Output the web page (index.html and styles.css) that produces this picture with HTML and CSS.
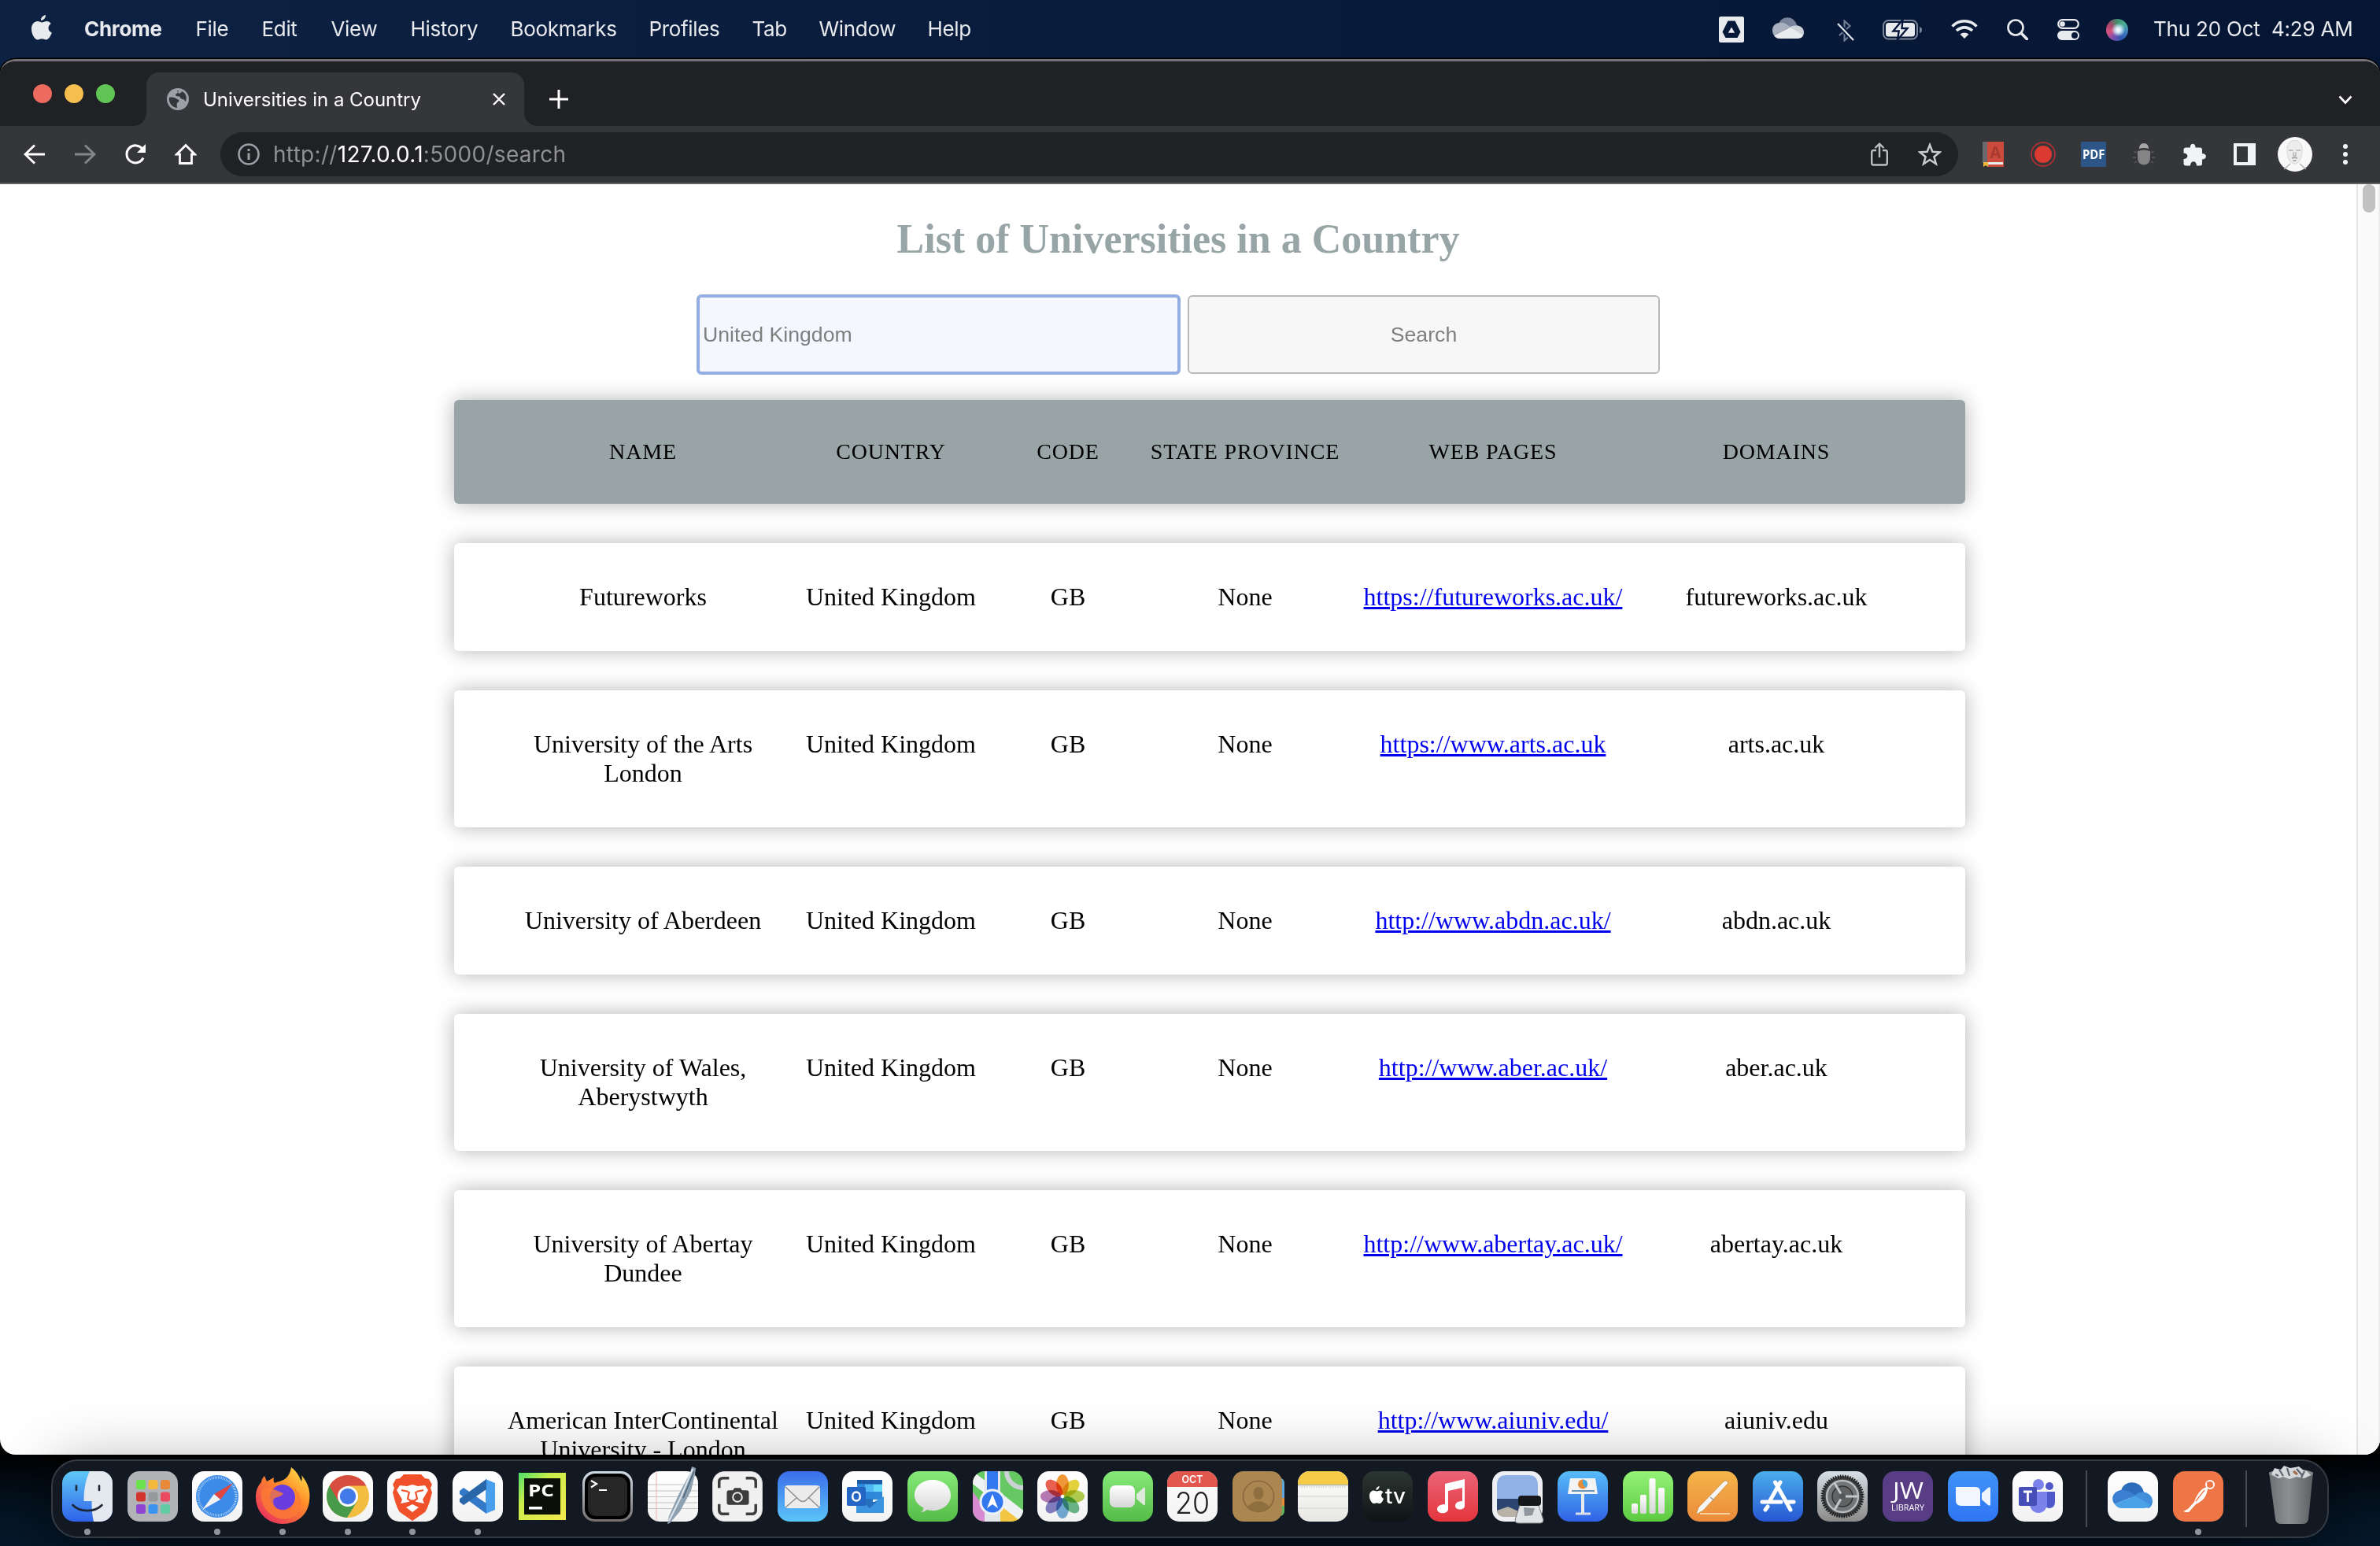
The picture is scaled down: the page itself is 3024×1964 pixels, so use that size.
FILE: index.html
```html
<!DOCTYPE html>
<html lang="en">
<head>
<meta charset="utf-8">
<title>Universities in a Country</title>
<link rel="stylesheet" href="styles.css">
</head>
<body>
<header class="menubar">
  <svg class="apple" viewBox="0 0 26 32"><path d="M18 0c.3 3-2.400 7-6 7C11.600 4 14.500.600 18 0zM24.800 11c-5 3.200-3.800 9.700 1 11.500C24.300 27 21.500 31.500 18.500 31.500c-2 0-2.800-1.200-5.200-1.200s-3.300 1.200-5.200 1.200C4 31.500 0 24.500 0 17.800 0 11.500 3.800 8 7.800 8c2.200 0 4 1.400 5.500 1.400 1.400 0 3.500-1.500 6.200-1.500 1.800 0 3.900 1 5.300 3.100z"/></svg>
  <nav class="menus">
    <b>Chrome</b><span>File</span><span>Edit</span><span>View</span><span>History</span><span>Bookmarks</span><span>Profiles</span><span>Tab</span><span>Window</span><span>Help</span>
  </nav>
  <div class="tray">
    <svg class="t-drive" viewBox="0 0 32 33"><rect width="32" height="33" rx="2.500" fill="#e8eaee"/><path fill="#06183a" fill-rule="evenodd" d="M11.500 5.500h9L27.500 19.500 23.500 27H8.500L4.500 19.500zM16 13.500l-4.200 7.300h8.400z"/></svg>
    <svg class="t-cloud" viewBox="0 0 40 27"><path fill="#79839a" d="M8 8C12-2 27-3 31 10L22 14z"/><path fill="#a9b0be" d="M9 7c6-1 9 2 14 5.500L2 23C-3 15 2 7 9 7z"/><path fill="#cdd1d8" d="M22 13c6-5 18-3 18 6 0 2-.500 3-1 4z"/><path fill="#e8eaee" d="M2 23 22.500 12.800 39.300 22.500C38 26 35 27 32 27H9c-3 0-5.500-1.500-7-4z"/></svg>
    <svg class="t-bt" viewBox="0 0 22 28"><path d="M3 20 16.500 8 9.500 1.500v25l7-6.500L13 16.500" fill="none" stroke="#707b91" stroke-width="2.200"/><path d="M1 5 21 26" stroke="#06183a" stroke-width="6"/><path d="M1 5 21 26" stroke="#dfe3ea" stroke-width="2.200"/></svg>
    <svg class="t-bat" viewBox="0 0 50 26"><rect x="1" y="1" width="43" height="23.500" rx="6.500" fill="none" stroke="#7c8598" stroke-width="2"/><path d="M47 9v8q3-1 3-4t-3-4z" fill="#7c8598"/><rect x="4" y="4" width="37" height="17.500" rx="3.500" fill="#e8eaee"/><path d="M25.500 0 13.500 14.500h7.200L19 25.500 31.500 11h-7z" fill="#e8eaee" stroke="#06183a" stroke-width="2.400"/></svg>
    <svg class="t-wifi" viewBox="0 0 34 25"><path d="M1.500 9.500C10 .500 24 .500 32.500 9.500M7 15c6-5.500 14-5.500 20 0" fill="none" stroke="#e8eaee" stroke-width="3.600"/><path d="M17 25l-5.500-5.500q5.500-4 11 0z" fill="#e8eaee"/></svg>
    <svg class="t-search" viewBox="0 0 27 27"><circle cx="11" cy="11" r="9.500" fill="none" stroke="#e8eaee" stroke-width="2.600"/><path d="M18 18l7.300 7.500" stroke="#e8eaee" stroke-width="3.600" stroke-linecap="round"/></svg>
    <svg class="t-cc" viewBox="0 0 28 27"><rect x="1.200" y="1.200" width="25.600" height="10.600" rx="5.300" fill="none" stroke="#e8eaee" stroke-width="2.200"/><circle cx="6.500" cy="6.500" r="3.300" fill="#e8eaee"/><rect y="15" width="28" height="12" rx="6" fill="#e8eaee"/><circle cx="22" cy="21" r="4" fill="#06183a"/></svg>
    <i class="t-siri"></i>
    <span class="clock">Thu 20 Oct&nbsp; 4:29 AM</span>
  </div>
</header>

<section class="window">
  <div class="tabstrip">
    <div class="lights"><i class="red"></i><i class="yellow"></i><i class="green"></i></div>
    <div class="tab">
      <svg class="favicon" viewBox="0 0 28 28"><circle cx="14" cy="14" r="14" fill="#9aa0a6"/><path fill="#35363a" d="M3 12c4-1 8 0 10 2 3 0 3 3 1 4-2 1-1 4-1 7C6 24 2 18 3 12zM13 3c2 2 0 4-2 5 0 3 4 2 6 3 0 3 2 3 4 3l3 3c2-6 0-11-5-13-1 3-3 2-4 3-1-1-1-3 0-4z"/></svg>
      <span class="tab-title">Universities in a Country</span>
      <svg class="tab-close" viewBox="0 0 16 16"><path d="M1 1l14 14M15 1 1 15" stroke="#fff" stroke-width="2.400"/></svg>
    </div>
    <svg class="newtab" viewBox="0 0 24 24"><path d="M12 0v24M0 12h24" stroke="#fff" stroke-width="3"/></svg>
    <svg class="chevron" viewBox="0 0 18 12"><path d="M1.500 1.500 9 9.500l7.500-8" fill="none" stroke="#fff" stroke-width="2.600"/></svg>
  </div>
  <div class="toolbar">
    <div class="cell back"><svg width="27" height="26" viewBox="0 0 27 26"><path d="M27 13H2M14 1.500 2 13l12 11.500" fill="none" stroke="#fff" stroke-width="2.800"/></svg></div>
    <div class="cell"><svg width="27" height="26" viewBox="0 0 27 26"><path d="M0 13h25M13 1.500 25 13 13 24.500" fill="none" stroke="#85868a" stroke-width="2.800"/></svg></div>
    <div class="cell"><svg width="28" height="28" viewBox="0 0 28 28"><path d="M24 18.500A11 11 0 1 1 23 7.500" fill="none" stroke="#fff" stroke-width="3"/><path d="M27 1v11H16z" fill="#fff"/></svg></div>
    <div class="cell"><svg width="28" height="28" viewBox="0 0 28 28"><path d="M2.500 14 14 2.500 25.500 14H21.500v11.500h-15V14z" fill="none" stroke="#fff" stroke-width="2.800"/></svg></div>
    <div class="omnibox">
      <svg class="info" viewBox="0 0 28 28"><circle cx="14" cy="14" r="12.500" fill="none" stroke="#9aa0a6" stroke-width="2.600"/><path d="M14 12.500V21M14 7v3" stroke="#9aa0a6" stroke-width="3"/></svg>
      <span class="url">http://<em>127.0.0.1</em>:5000/search</span>
      <div class="cell"><svg width="22" height="30" viewBox="0 0 22 30"><path d="M7 10H3.500Q1.200 10 1.200 12.500V26q0 2.500 2.300 2.500h15q2.300 0 2.300-2.500V12.500Q20.800 10 18.500 10H15M11 19V2M5.500 7 11 1.700 16.500 7" fill="none" stroke="#bdbec0" stroke-width="2.400"/></svg></div>
      <div class="cell"><svg width="30" height="30" viewBox="0 0 30 30"><path d="M15 3l3.400 8.800 9.200.500-7.200 5.900 2.500 9L15 22l-7.900 5.200 2.500-9-7.200-5.900 9.200-.500z" fill="none" stroke="#c9cacc" stroke-width="2.500"/></svg></div>
    </div>
    <div class="cell"><svg width="27" height="32" viewBox="0 0 27 32"><path fill="#6a6a6d" d="M0 0h6v27H0z"/><path fill="#cb4b3d" d="M6 0h21v32H6z"/><path fill="#e8eef0" d="M6 26h20v3H6z"/><path fill="#f0b93a" d="M1 26h6v6l-3-2-3 2z"/><text x="16.500" y="20.500" font-size="20" font-weight="700" text-anchor="middle" fill="#a83a30" font-family="Inter">A</text></svg></div>
    <div class="cell"><svg width="32" height="32" viewBox="0 0 32 32"><circle cx="16" cy="16" r="15" fill="none" stroke="#a83034" stroke-width="1.800"/><circle cx="16" cy="16" r="11" fill="#dc3a33"/></svg></div>
    <div class="cell"><svg width="32" height="32" viewBox="0 0 32 32"><rect width="32" height="32" fill="#2c5687"/><text x="2" y="22" font-family="Open Sans" font-weight="700" font-size="16" textLength="28.500" lengthAdjust="spacingAndGlyphs" fill="#fff">PDF</text></svg></div>
    <div class="cell"><svg width="28" height="28" viewBox="0 0 28 28"><path d="M8 7q0-7 6-7t6 7q-6-2-12 0z" fill="#a6a6a6"/><path d="M6 10q8-3 16 0v8q0 9-8 9.500Q6 27 6 18z" fill="#858585"/><path d="M5 12 1.500 10.500M4 18H0M5 23l-3 2M23 12l3.500-1.500M24 18h4M23 23l3 2" stroke="#5d5d60" stroke-width="1.400"/></svg></div>
    <div class="cell"><svg width="29" height="29" viewBox="0 0 29 29"><path fill="#f1f3f4" d="M9 5.500C8-1 16-1 15.500 5.500H21q3 0 3 3V13c6.500 0 6.500 7.500 0 7.500V26q0 2.500-3 2.500h-4c0-7-8-7-8 0H3.500q-3 0-3-3V20c6.500 0 6.500-7.500 0-7.500V8.500q0-3 3-3z"/></svg></div>
    <div class="cell"><svg width="28" height="28" viewBox="0 0 28 28"><path fill="#f1f3f4" fill-rule="evenodd" d="M0 0h28v28H0zM4 4v20h14V4z"/></svg></div>
    <div class="cell"><svg width="44" height="44" viewBox="0 0 44 44"><circle cx="22" cy="22" r="22" fill="#f8f8f8"/><path d="M12 17C11 0 32 0 31 17c0 8-3 17-9.500 17S12 25 12 17z" fill="#ececec" stroke="#d6d6d6"/><path d="M14 17h5.500M23.500 17H29M20 19v5h3v-5M8 41l8-7M36 41l-8-7" stroke="#b0b0b0" stroke-width="1.300" fill="none"/><path d="M18 27q3.500-1.500 7 0M19.500 30h4" stroke="#999" stroke-width="1.600" fill="none"/></svg></div>
    <div class="cell"><svg width="6" height="28" viewBox="0 0 6 28"><g fill="#f1f3f4"><circle cx="3" cy="4" r="3"/><circle cx="3" cy="14" r="3"/><circle cx="3" cy="24" r="3"/></g></svg></div>
  </div>
  <div class="viewport">
    <main class="page">
      <h1 class="heading">List of Universities in a Country</h1>
      <form class="search"><div class="field">United Kingdom</div><div class="button">Search</div></form>
      <ul class="table">
        <li class="row head"><div>Name</div><div>Country</div><div>Code</div><div>State Province</div><div>Web Pages</div><div>Domains</div></li>
        <li class="row"><div>Futureworks</div><div>United Kingdom</div><div>GB</div><div>None</div><div><a href="#">https://futureworks.ac.uk/</a></div><div>futureworks.ac.uk</div></li>
        <li class="row"><div>University of the Arts London</div><div>United Kingdom</div><div>GB</div><div>None</div><div><a href="#">https://www.arts.ac.uk</a></div><div>arts.ac.uk</div></li>
        <li class="row"><div>University of Aberdeen</div><div>United Kingdom</div><div>GB</div><div>None</div><div><a href="#">http://www.abdn.ac.uk/</a></div><div>abdn.ac.uk</div></li>
        <li class="row"><div>University of Wales, Aberystwyth</div><div>United Kingdom</div><div>GB</div><div>None</div><div><a href="#">http://www.aber.ac.uk/</a></div><div>aber.ac.uk</div></li>
        <li class="row"><div>University of Abertay Dundee</div><div>United Kingdom</div><div>GB</div><div>None</div><div><a href="#">http://www.abertay.ac.uk/</a></div><div>abertay.ac.uk</div></li>
        <li class="row"><div>American InterContinental University - London</div><div>United Kingdom</div><div>GB</div><div>None</div><div><a href="#">http://www.aiuniv.edu/</a></div><div>aiuniv.edu</div></li>
      </ul>
    </main>
    <div class="scrollbar"><i></i></div>
  </div>
</section>

<footer class="dock">
  <svg width="0" height="0" class="defs"><defs>
    <linearGradient id="silver" x2="0" y2="1"><stop stop-color="#fff"/><stop offset="1" stop-color="#d6d6d6"/></linearGradient>
    <linearGradient id="flame" x1="1" x2=".2" y2="1"><stop stop-color="#fff14f"/><stop offset=".45" stop-color="#ff8a2a"/><stop offset="1" stop-color="#e8305f"/></linearGradient>
    <linearGradient id="finder" x2="0" y2="1"><stop stop-color="#5fc9f8"/><stop offset="1" stop-color="#2f62ea"/></linearGradient>
    <linearGradient id="bin" x2="1"><stop stop-color="#6d7073"/><stop offset=".45" stop-color="#8d9093"/><stop offset="1" stop-color="#5c5f62"/></linearGradient>
    <linearGradient id="pyc" x2="1" y2="1"><stop stop-color="#4be06a"/><stop offset=".35" stop-color="#c9ee4a"/><stop offset="1" stop-color="#f5e84e"/></linearGradient>
  </defs></svg>

  <div class="slot on"><svg class="app finder" viewBox="0 0 64 64"><rect width="64" height="64" fill="url(#finder)"/><path d="M35 0h29v64H40c-2-8-2.500-16-2.500-26H27.500C27.500 20 31 8 35 0z" fill="#e4e8ef"/><path d="M18 18.500v5.500M47 18.500v5.500M13.500 43c9 9.500 28 9.500 37 0" fill="none" stroke="#1c2634" stroke-width="2.600" stroke-linecap="round"/></svg></div>
  <div class="slot"><svg class="app launchpad" viewBox="0 0 64 64"><g><rect x="11" y="11" width="12" height="12" rx="3" fill="#6be24e"/><rect x="26.500" y="11" width="12" height="12" rx="3" fill="#f3b93c"/><rect x="42" y="11" width="12" height="12" rx="3" fill="#e8893a"/><rect x="11" y="26.500" width="12" height="12" rx="3" fill="#d0362c"/><rect x="26.500" y="26.500" width="12" height="12" rx="3" fill="#96999c"/><rect x="42" y="26.500" width="12" height="12" rx="3" fill="#e94b60"/><rect x="11" y="42" width="12" height="12" rx="3" fill="#8f45cf"/><rect x="26.500" y="42" width="12" height="12" rx="3" fill="#3a95f0"/><rect x="42" y="42" width="12" height="12" rx="3" fill="#62cba4"/></g></svg></div>
  <div class="slot on"><svg class="app white" viewBox="0 0 64 64"><circle cx="32" cy="32" r="27" fill="#3d8be9"/><circle cx="32" cy="32" r="24" fill="none" stroke="#cfe4fb" stroke-width="3" stroke-dasharray=".7 1.400"/><path d="M52 15 36 36l-8-7z" fill="#e2463f"/><path d="M13 49l15-20 8 7z" fill="#f1f3f6"/></svg></div>
  <div class="slot on"><svg class="app bare" viewBox="0 0 64 64"><path d="M43-5c9 7 10 12 13 18 1-3 1-5 0-8 8 9 12 20 10 33C64 56 50 67 32 67S-2 53-2 33c0-9 3-15 7-19 0-3 2-6 4-8l3 7 9-5c-1 4 0 6 1 7C28 12 40 13 43-5z" fill="url(#flame)"/><circle cx="32" cy="33" r="16" fill="#6a3de0"/><path d="M6 22c9-3 16 2 27 6-2 5-8 4-12 7-3 6 2 14 11 15 18 0 22-17 13-30 12 8 14 26 4 36C30 70-2 50 6 22z" fill="#fb7a35" opacity=".8"/></svg></div>
  <div class="slot on"><svg class="app white" viewBox="0 0 64 64"><circle cx="32" cy="32" r="27" fill="#f3bd42"/><path d="M32 32 8.600 18.500A27 27 0 0 0 31 59L44 38z" fill="#489a4b"/><path d="M8.600 18.500A27 27 0 0 1 55.400 18.500H32L20 38z" fill="#d74e40"/><circle cx="32" cy="32" r="13" fill="#fff"/><circle cx="32" cy="32" r="10.200" fill="#4379e8"/></svg></div>
  <div class="slot on"><svg class="app white" viewBox="0 0 64 64"><path d="M21 4h22l5 5 5 1 4 7-2 4 2 6c-3 12-5 19-9 25L32 63 16 52C12 46 10 39 7 27l2-6-2-4 4-7 5-1z" fill="#f0502a"/><path d="M16 18l9 1 7-2 7 2 9-1 4 6-7 12 2 5-10-2-5-3-5 3-10 2 2-5-7-12zM32 42l8 4-8 6-8-6z" fill="#fff"/><path d="M18 24l9 2M46 24l-9 2M28 26l-2 9 6 4 6-4-2-9" fill="none" stroke="#f0502a" stroke-width="2.200"/></svg></div>
  <div class="slot on"><svg class="app white" viewBox="0 0 64 64"><path d="M42 10l12 5v34l-12 5z" fill="#4a9fea"/><path d="M9 25l5-4 29 20v13L9 29z" fill="#3479c8"/><path d="M9 39l5 4 29-20V10L9 35z" fill="#2a66aa"/></svg></div>
  <div class="slot"><svg class="app bare" viewBox="0 0 64 64"><rect x="2" y="2" width="60" height="60" fill="url(#pyc)"/><rect x="9" y="9" width="46" height="46" fill="#0a0f08"/><text x="14" y="32" font-family="Open Sans" font-weight="700" font-size="22" textLength="33" lengthAdjust="spacingAndGlyphs" fill="#fff">PC</text><rect x="15" y="45" width="17" height="3.500" fill="#fff"/></svg></div>
  <div class="slot"><svg class="app terminal" viewBox="0 0 64 64"><rect x="3" y="3" width="58" height="58" rx="13" fill="#000"/><rect x="7" y="7" width="50" height="50" rx="10" fill="#262626"/><path d="M11 12l7 4-7 4.500" fill="none" stroke="#fff" stroke-width="2.200"/><path d="M21 24h10" stroke="#fff" stroke-width="2.200"/></svg></div>
  <div class="slot"><svg class="app white pad" viewBox="0 0 64 64"><path d="M0 17h64M0 25h64M0 32.500h64M0 40h64M0 47.500h64" stroke="#c4c4c4" stroke-width="1.200"/><path d="M11 0v64" stroke="#f0b0ac"/><path d="M56-6l5 2-1 8-5 21-14 26-13 15-3 1 2-10 12-27 15-28z" fill="#8fa0b0"/><path d="M57-3 42 33 27 63" fill="none" stroke="#dde6ee" stroke-width="2"/><path d="M59 0 45 34" stroke="#4b647c" stroke-width="1.500"/></svg></div>
  <div class="slot"><svg class="app shot" viewBox="0 0 64 64"><path d="M8 21v-8q0-5 5-5h8M43 8h8q5 0 5 5v8M56 42v8q0 5-5 5h-8M21 55h-8q-5 0-5-5v-8" fill="none" stroke="#3d3d3d" stroke-width="3.600"/><path d="M21 24h5l2-3h8l2 3h6q3 0 3 3v13q0 3-3 3H21q-3 0-3-3V27q0-3 3-3z" fill="#3d3d3d"/><circle cx="32" cy="33" r="6" fill="none" stroke="#f0f0f0" stroke-width="2"/></svg></div>
  <div class="slot"><svg class="app mail" viewBox="0 0 64 64"><rect x="9" y="18" width="45" height="29" rx="4" fill="#ececec"/><path d="M10 20l18 17q4 3 8 0l17-17M10 46l14-12M53 46 40 34" fill="none" stroke="#8f9296" stroke-width="1.600"/></svg></div>
  <div class="slot"><svg class="app white" viewBox="0 0 64 64"><path d="M19 11h32v25H19z" fill="#2f88da"/><path d="M19 11h32v5H19z" fill="#2059a4"/><path d="M29 17h11v9H29z" fill="#51b7f2"/><path d="M40 17h11v9H40z" fill="#68d8f8"/><path d="M18 32l17 10 18-10v21H18z" fill="#3c95de"/><path d="M29 35h10v4h5l-9 8-9-8h3z" fill="#2670bd"/><rect x="6" y="20" width="24" height="24" rx="2" fill="#2565c4"/><ellipse cx="18" cy="32" rx="4.800" ry="5.500" fill="none" stroke="#fff" stroke-width="2.600"/></svg></div>
  <div class="slot"><svg class="app green" viewBox="0 0 64 64"><path d="M32 11c13 0 23 8 23 19.500S45 50 32 50q-4 0-7-1-4 3-8 3.500 3-2 3.500-6C13 43 9 37 9 30.500 9 19 19 11 32 11z" fill="url(#silver)"/></svg></div>
  <div class="slot"><svg class="app maps" viewBox="0 0 64 64"><rect width="64" height="64" fill="#65c863"/><path d="M0 26 28 64H0z" fill="#d68bd0"/><path d="M32 32 64 64H32z" fill="#f3c543"/><path d="M0 8 64 58" stroke="#f0f1f3" stroke-width="13"/><path d="M25 0v64" stroke="#e3e7ec" stroke-width="20"/><path d="M25 0v36" stroke="#3478f0" stroke-width="14"/><circle cx="64" cy="0" r="21" fill="none" stroke="#ccd1d5" stroke-width="6"/><circle cx="25" cy="39" r="15" fill="#3478f0" stroke="#eef2f8" stroke-width="3"/><path d="M25 29l7 18-7-5-7 5z" fill="#fff"/></svg></div>
  <div class="slot"><svg class="app white petals" viewBox="0 0 64 64"><ellipse cx="32" cy="17" rx="8" ry="13" fill="#f29a38"/><ellipse cx="32" cy="17" rx="8" ry="13" fill="#e7d53d" transform="rotate(45 32 32)"/><ellipse cx="32" cy="17" rx="8" ry="13" fill="#b3cf4e" transform="rotate(90 32 32)"/><ellipse cx="32" cy="17" rx="8" ry="13" fill="#6cba8a" transform="rotate(135 32 32)"/><ellipse cx="32" cy="17" rx="8" ry="13" fill="#74add8" transform="rotate(180 32 32)"/><ellipse cx="32" cy="17" rx="8" ry="13" fill="#8482c4" transform="rotate(225 32 32)"/><ellipse cx="32" cy="17" rx="8" ry="13" fill="#b97cb5" transform="rotate(270 32 32)"/><ellipse cx="32" cy="17" rx="8" ry="13" fill="#ec6150" transform="rotate(315 32 32)"/></svg></div>
  <div class="slot"><svg class="app green" viewBox="0 0 64 64"><rect x="9" y="18" width="32" height="28" rx="7" fill="url(#silver)"/><path d="M43 29l9-8q2-1 2 1v20q0 2-2 1l-9-8z" fill="#dfe8dc"/></svg></div>
  <div class="slot"><svg class="app white" viewBox="0 0 64 64"><rect width="64" height="20" fill="#e2574e"/><text x="32" y="15" font-family="Inter" font-weight="600" font-size="12.500" text-anchor="middle" fill="#fff">OCT</text><text x="32" y="54" font-family="Inter" font-weight="300" font-size="38" text-anchor="middle" textLength="44" lengthAdjust="spacingAndGlyphs" fill="#222">20</text></svg></div>
  <div class="slot"><svg class="app bare" viewBox="0 0 64 64"><rect x="50" y="9" width="16" height="48" rx="6" fill="#62b45c"/><path d="M50 9h12q4 2 4 8v18H50z" fill="#61a5dc"/><path d="M50 34h16v10H50z" fill="#ee8a34"/><rect width="63" height="64" rx="14" fill="#ab8650"/><circle cx="33" cy="32" r="19.500" fill="none" stroke="#87683c" stroke-width="1.600"/><ellipse cx="33" cy="28" rx="6.500" ry="8" fill="#8f6f40"/><path d="M19 45q14-14 28 0-13 12-28 0z" fill="#8f6f40"/></svg></div>
  <div class="slot"><svg class="app notes" viewBox="0 0 64 64"><rect width="64" height="17" fill="#f6cc46"/><path d="M0 17.500h64" stroke="#b9b5a8" stroke-width="1.500"/><path d="M2 20h60" stroke="#bbb" stroke-width="1.200" stroke-dasharray="1.500 1.500"/><path d="M0 32h64M0 47h64" stroke="#d0cfcb" stroke-width="1.200"/></svg></div>
  <div class="slot"><svg class="app tv" viewBox="0 0 64 64"><path transform="translate(9 19) scale(.7)" fill="#fff" d="M18 0c.3 3-2.400 7-6 7C11.600 4 14.500.600 18 0zM24.800 11c-5 3.200-3.800 9.700 1 11.500C24.300 27 21.500 31.500 18.500 31.500c-2 0-2.800-1.200-5.200-1.200s-3.300 1.200-5.200 1.200C4 31.500 0 24.500 0 17.800 0 11.500 3.800 8 7.800 8c2.200 0 4 1.400 5.500 1.400 1.400 0 3.500-1.500 6.200-1.500 1.800 0 3.900 1 5.300 3.100z"/><text x="29" y="41" font-family="Inter" font-weight="500" font-size="26" textLength="26" lengthAdjust="spacingAndGlyphs" fill="#fff">tv</text></svg></div>
  <div class="slot"><svg class="app music" viewBox="0 0 64 64"><path d="M22 16l25-6v34c0 6-12 6-12 0 0-4 4-6 9-6V21l-18 4v23c0 7-14 7-14 0 0-4 5-6 10-6z" fill="#fff"/></svg></div>
  <div class="slot"><svg class="app preview" viewBox="0 0 64 64"><path d="M6 18Q6 5 18 5h28q12 0 12 13v17H6z" fill="#8fb1e6"/><path d="M6 35h52v12q0 11-11 11H18Q6 58 6 47z" fill="#2b4470"/><path d="M6 50l14-5 20 9v4H18Q6 58 6 50z" fill="#b9b2a6"/><path d="M36 40h22l7 22q0 4-4 4H33q-4 0-4-4z" fill="#dfe3e4" stroke="#77797b"/><path d="M40 46l14 1-3 9-10 1z" fill="#8f979d"/><rect x="33" y="31" width="29" height="13" rx="4" fill="#15171a"/></svg></div>
  <div class="slot"><svg class="app keynote" viewBox="0 0 64 64"><path d="M16 9h32l3 20H13z" fill="#f3f3f3"/><path d="M18 25h29" stroke="#6b95b8" stroke-width="2"/><circle cx="32" cy="16.500" r="6" fill="#e48b3c"/><path d="M32 16.500v-6a6 6 0 0 1 4 10.500z" fill="#49aee0"/><path d="M32 29v25" stroke="#e8ebee" stroke-width="4"/><path d="M23 54h19" stroke="#d9dee6" stroke-width="3"/></svg></div>
  <div class="slot"><svg class="app lime" viewBox="0 0 64 64"><g fill="url(#silver)"><rect x="11" y="41" width="8" height="13" rx="2"/><rect x="22" y="30" width="8" height="24" rx="2"/><rect x="33.500" y="9" width="8" height="45" rx="2"/><rect x="45" y="21" width="8" height="33" rx="2"/></g></svg></div>
  <div class="slot"><svg class="app pages" viewBox="0 0 64 64"><path d="M16 54h38" stroke="#f8d09d" stroke-width="2"/><path d="M46 13q4-3 6 2L20 50l-9 5 3-9z" fill="#f5f5f5" stroke="#c98636" stroke-width=".8"/><path d="M29 33l5 4" stroke="#999" stroke-width="1.500"/></svg></div>
  <div class="slot"><svg class="app store" viewBox="0 0 64 64"><path d="M35 14 21 39M28.500 14 48 49M12 39h24M44 39h8M19 45l-3 4" fill="none" stroke="#fff" stroke-width="5" stroke-linecap="round"/></svg></div>
  <div class="slot"><svg class="app prefs" viewBox="0 0 64 64"><circle cx="32" cy="32" r="26" fill="#47484a"/><circle cx="32" cy="32" r="25" fill="none" stroke="#202122" stroke-width="5" stroke-dasharray="1.500 1.500"/><circle cx="32" cy="32" r="20" fill="#727476" stroke="#b9bcbf" stroke-width="2.400"/><circle cx="32" cy="32" r="13" fill="#606264" stroke="#333" stroke-width="1.500"/><path d="M32 32h20M32 32 22 15M32 32 22 49" stroke="#c4c7c9" stroke-width="3"/><circle cx="32" cy="32" r="4" fill="#55575a"/></svg></div>
  <div class="slot"><svg class="app jw" viewBox="0 0 64 64"><text x="13" y="35" font-family="Open Sans" font-size="30" textLength="39" lengthAdjust="spacingAndGlyphs" fill="#fff">JW</text><text x="11" y="50" font-family="Open Sans" font-size="11.500" textLength="42" lengthAdjust="spacingAndGlyphs" fill="#fff">LIBRARY</text></svg></div>
  <div class="slot"><svg class="app zoom" viewBox="0 0 64 64"><path d="M10 20h25q6 0 6 6v18H17q-7 0-7-7z" fill="#f2f7ff"/><path d="M43 28l8-7q3-2 3 1v20q0 3-3 1l-8-7z" fill="#eef5ff"/></svg></div>
  <div class="slot"><svg class="app white" viewBox="0 0 64 64"><circle cx="33" cy="17" r="7" fill="#7b83eb"/><circle cx="47" cy="19" r="5" fill="#5059c9"/><path d="M42 26h12v13c0 10-12 10-12 4z" fill="#5059c9"/><path d="M22 26h22v15c0 16-22 16-22 0z" fill="#7b83eb"/><rect x="8" y="20" width="23" height="24" rx="2" fill="#464eb8"/><path d="M14 26h11M19.500 26v13" stroke="#fff" stroke-width="2.800"/></svg></div>
  <i class="rule first"></i>
  <div class="slot"><svg class="app white" viewBox="0 0 64 64"><path d="M17 25c3-14 25-15 29 2L32 36z" fill="#2c6dbb"/><path d="M9 42C2 34 9 24 18 24c7 0 12 3 17 7z" fill="#3a7fd0"/><path d="M34 31c9-9 23-3 23 7 0 5-3 9-6 9z" fill="#3f8fdd"/><path d="M9 42l26-11 19 12q-3 4-8 4H18q-6 0-9-5z" fill="#4ba2e6"/></svg></div>
  <div class="slot on second"><svg class="app postman" viewBox="0 0 64 64"><circle cx="47" cy="17" r="5" fill="none" stroke="#fff" stroke-width="2"/><path d="M43 20c-7 2-13 9-16 19l-8 9-6 3 3 1h4l9-10c9-4 14-10 15-20z" fill="#fff"/><path d="M40 24 29 38M43 14l8 5" stroke="#ee7546" stroke-width="1.300"/></svg></div>
  <i class="rule last"></i>
  <div class="slot trash"><svg class="app bare" viewBox="0 0 64 64"><path d="M4 1h56l-6 60q-1 6-8 6H20q-7 0-8-6z" fill="url(#bin)"/><ellipse cx="32" cy="3" rx="28" ry="6" fill="#85888b"/><path d="M7 4l4-8 8 2 4-5 8 3 6-1 5-1 6 5 4 1 5 5-8 4-10-2-9 3-8-3-6 2z" fill="#d5d8da"/><path d="M17-2l5 8M27-4l3 10M39-3l7 8M49 0l-4 8M12 4l4 2" stroke="#5a636d" stroke-width="2.200"/><path d="M35 0l5 4" stroke="#a36a4c" stroke-width="3"/></svg></div>
</footer>
</body>
</html>
```
FILE: styles.css
```css
* { box-sizing: border-box; }

body {
  margin: 0;
  width: 3024px;
  height: 1964px;
  overflow: hidden;
  display: flex;
  flex-direction: column;
  background: linear-gradient(90deg, #0d2143, #051634) 0 0 / 100% 110px no-repeat,
    radial-gradient(ellipse 240px 130px at 0 1964px, #06182a, transparent) no-repeat,
    radial-gradient(ellipse 240px 130px at 3024px 1964px, #06182a, transparent) no-repeat,
    linear-gradient(#000 0, #000 1860px, #03101d 1964px);
  font-family: Inter, "Liberation Sans", sans-serif;
}

svg { display: block; flex: none; }

/* Menu bar */
.menubar {
  height: 75px;
  flex: none;
  display: flex;
  align-items: flex-start;
  color: #e8eaee;
  font-size: 26px;
  line-height: 32px;
}
.apple { width: 26px; height: 32px; margin: 19px 41px 0 40px; fill: #e8eaee; }
.menus {
  display: grid;
  grid-template-columns: 141.5px 84px 88px 101px 127px 176px 131px 85px 138px 100px;
  padding-top: 21px;
  letter-spacing: -0.33px;
  white-space: nowrap;
}
.menus b { font-weight: 700; }
.tray { margin-left: auto; height: 75px; display: flex; align-items: center; }
.tray > * { flex: none; }
.t-drive { width: 32px; height: 33px; }
.t-cloud { width: 40px; height: 27px; margin: 0 0 4px 36px; }
.t-bt { width: 22px; height: 28px; margin: 2px 0 0 42px; }
.t-bat { width: 50px; height: 26px; margin-left: 36px; }
.t-wifi { width: 34px; height: 25px; margin: 0 0 2px 37px; }
.t-search { width: 27px; height: 27px; margin-left: 37px; }
.t-cc { width: 28px; height: 27px; margin-left: 37px; }
.t-siri {
  width: 28px;
  height: 28px;
  margin-left: 34px;
  border-radius: 50%;
  background: radial-gradient(circle at 55% 50%, #fff 0, #cfe6f5 16%, transparent 42%),
    conic-gradient(#3f8f6c, #4fae9a, #3f7fc0, #2f56b0, #7d4fb0, #d8527d, #a34668, #3f8f6c);
}
.clock { width: 288px; margin-left: 32px; white-space: nowrap; letter-spacing: -0.2px; padding-bottom: 1px; }

/* Browser window */
.window {
  height: 1773px;
  flex: none;
  display: flex;
  flex-direction: column;
  border-radius: 20px;
  overflow: hidden;
  background: #202124;
  border-top: 3px solid #747276;
  box-shadow: 0 0 0 1.5px #000;
}
.tabstrip { height: 82px; flex: none; display: flex; align-items: flex-end; background: #202124; }
.lights { display: flex; gap: 16px; padding: 0 0 29px 42px; width: 186px; }
.lights i { width: 24px; height: 24px; border-radius: 50%; }
.red { background: #ed6a5f; }
.yellow { background: #f5bf4f; }
.green { background: #61c555; }
.tab {
  position: relative;
  width: 480px;
  height: 68px;
  display: flex;
  align-items: center;
  padding: 0 24px 0 26px;
  border-radius: 16px 16px 0 0;
  background: #35363a;
}
.tab::before, .tab::after {
  content: "";
  position: absolute;
  bottom: 0;
  width: 16px;
  height: 16px;
}
.tab::before { left: -16px; background: radial-gradient(circle at 0 0, transparent 15.5px, #35363a 16px); }
.tab::after { right: -16px; background: radial-gradient(circle at 100% 0, transparent 15.5px, #35363a 16px); }
.favicon { width: 28px; height: 28px; }
.tab-title { margin-left: 18px; flex: 1; color: #fff; font-size: 24px; letter-spacing: -0.02px; white-space: nowrap; }
.tab-close { width: 16px; height: 16px; }
.newtab { width: 24px; height: 24px; margin: 0 0 22px 32px; }
.chevron { width: 18px; height: 12px; margin: 0 35px 27px auto; }

.toolbar {
  height: 74px;
  flex: none;
  display: flex;
  align-items: center;
  padding: 0 12px;
  background: #35363a;
  border-bottom: 2px solid #606165;
}
.cell { width: 64px; flex: none; display: flex; align-items: center; justify-content: center; }
.cell.back { padding-right: 2px; }
.omnibox {
  flex: 1;
  height: 56px;
  margin: 0 12px;
  padding: 0 4px 0 22px;
  display: flex;
  align-items: center;
  border-radius: 28px;
  background: #202124;
}
.info { width: 28px; height: 28px; }
.url { flex: 1; margin-left: 17px; font-size: 28px; letter-spacing: 0.3px; color: #909193; }
.url em { font-style: normal; color: #fff; }

/* Web page */
.viewport { flex: 1; min-height: 0; display: flex; background: #fff; }
.page { flex: 1; min-width: 0; padding-top: 40px; font-family: "Liberation Serif", serif; }
.heading { margin: 0; font-size: 52px; line-height: 60px; text-align: center; color: #98a5a6; }
.search {
  margin: 40px 0 32px;
  display: flex;
  align-items: center;
  justify-content: center;
  gap: 9px;
  font: 26.67px/94px "Liberation Sans", Arial, sans-serif;
  color: #7f7f7f;
}
.field { width: 615px; height: 102px; padding-left: 4px; border: 4px solid #94aee3; border-radius: 6px; background: #f4f7fe; }
.button { width: 600px; height: 100px; line-height: 96px; text-align: center; border: 2px solid #b9b9b9; border-radius: 6px; background: #f7f7f7; }
.table { list-style: none; margin: 0 auto; width: 2000px; padding: 0 0 0 80px; }
.row {
  display: grid;
  grid-template-columns: 20% 15% 10% 15% 20% 20%;
  margin: 0 0 50px;
  padding: 50px 60px;
  border-radius: 6px;
  font-size: 32px;
  line-height: 37px;
  text-align: center;
  background: #fff;
  box-shadow: 0 0 26px rgba(0, 0, 0, 0.3);
}
.row a { color: #0000ee; }
.head { background: #98a4a5; font-size: 28px; line-height: 32px; text-transform: uppercase; letter-spacing: 0.03em; }
.scrollbar { width: 30px; flex: none; background: #fafafa; border-left: 2px solid #e6e6e6; border-right: 2px solid #ececec; }
.scrollbar i { display: block; width: 16px; height: 36px; margin: 0 4px 0 auto; border-radius: 8px; background: #c1c1c1; }

/* Dock */
.dock {
  position: relative;
  width: 2894px;
  height: 100px;
  margin: 6px auto 0;
  padding: 0 0 0 3px;
  flex: none;
  display: flex;
  align-items: center;
  border: 2px solid #343b42;
  border-radius: 34px;
  background: #121922;
  box-shadow: 0 8px 80px rgba(0, 0, 0, 0.34);
}
.defs { position: absolute; }
.slot {
  width: 82.6px;
  height: 96px;
  flex: none;
  display: flex;
  flex-direction: column;
  align-items: center;
  padding-top: 13px;
  gap: 9px;
}
.slot.on::after { content: ""; width: 8px; height: 8px; border-radius: 50%; background: #8f959e; }
.app { width: 64px; height: 64px; border-radius: 15px; }
.bare { overflow: visible; border-radius: 0; }
.white { background: linear-gradient(#fff, #f2f2f2); }
.pad { overflow: visible; }
.petals ellipse { mix-blend-mode: multiply; }
.launchpad { background: #b1b3b7; }
.terminal { background: linear-gradient(#cfdbe6, #75706e); }
.shot { background: #f0f0f0; border: 1px solid #cfcfcf; }
.mail { background: linear-gradient(#3a6eea, #5cc5f9); }
.app.green { background: linear-gradient(#86ea79, #55bb47); }
.notes { background: linear-gradient(#fff, #e8e7e3); }
.tv { background: linear-gradient(#2b3632, #0f1314); }
.music { background: linear-gradient(#ea6478, #e5353d); }
.preview { background: #edeff2; overflow: visible; }
.keynote { background: linear-gradient(#57bdf8, #3062e6); }
.lime { background: linear-gradient(#94f277, #5cca40); }
.pages { background: linear-gradient(#f4b54a, #ec8a3a); }
.store { background: linear-gradient(#4aaeeb, #2857d4); }
.prefs { background: linear-gradient(#d5dfe6, #8c8a88); }
.jw { background: #583d84; }
.zoom { background: linear-gradient(#4193f7, #2f76f4); }
.postman { background: #ee7546; }
.rule { width: 2px; height: 72px; flex: none; background: #454b53; }
.rule.first { margin: 0 16px 0 20px; }
.slot.second { margin-left: 1px; }
.rule.last { margin: 0 15px 0 18px; }
```
